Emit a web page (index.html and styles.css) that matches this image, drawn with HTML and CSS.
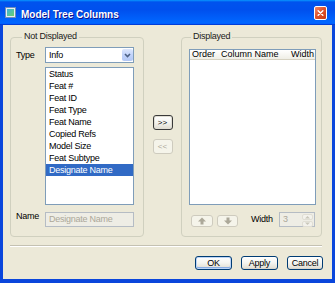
FILE: index.html
```html
<!DOCTYPE html>
<html>
<head>
<meta charset="utf-8">
<link rel="stylesheet" href="styles.css">
</head>
<body>
<div class="window">
  <div class="titlebar">
    <svg class="app-icon" width="11" height="11" viewBox="0 0 11 11">
      <defs>
        <linearGradient id="ig" x1="0" y1="0" x2="1" y2="1">
          <stop offset="0" stop-color="#3BB0E0"/>
          <stop offset="1" stop-color="#6CD36A"/>
        </linearGradient>
      </defs>
      <rect x="0.5" y="0.5" width="10" height="10" fill="#E9EEF4" stroke="#6E8FB8"/>
      <rect x="2" y="2" width="7" height="7" fill="url(#ig)"/>
    </svg>
    <span class="title">Model Tree Columns</span>
    <span class="close">
      <svg width="14" height="14" viewBox="0 0 14 14">
        <path d="M4 4 L10 10 M10 4 L4 10" stroke="#fff" stroke-width="1.8" stroke-linecap="round"/>
      </svg>
    </span>
  </div>
  <div class="frame">
    <div class="main">
      <div class="group group-left">
        <span class="legend legend-left">Not Displayed</span>
        <div class="left-grid">
          <span class="label">Type</span>
          <div class="combo">
            <span class="combo-text">Info</span>
            <span class="combo-btn">
              <svg width="11" height="12" viewBox="0 0 11 12">
                <path d="M3 5 L5.5 7.5 L8 5" fill="none" stroke="#4D6185" stroke-width="1.6"/>
              </svg>
            </span>
          </div>
          <div class="list">
            <div class="item">Status</div>
            <div class="item">Feat #</div>
            <div class="item">Feat ID</div>
            <div class="item">Feat Type</div>
            <div class="item">Feat Name</div>
            <div class="item">Copied Refs</div>
            <div class="item">Model Size</div>
            <div class="item">Feat Subtype</div>
            <div class="item selected">Designate Name</div>
          </div>
          <span class="label">Name</span>
          <div class="field disabled">Designate Name</div>
        </div>
      </div>
      <div class="mid">
        <button class="btn move focused">&gt;&gt;</button>
        <button class="btn move disabled">&lt;&lt;</button>
      </div>
      <div class="group group-right">
        <span class="legend legend-right">Displayed</span>
        <div class="table">
          <div class="thead">
            <span class="th">Order</span>
            <span class="th">Column Name</span>
            <span class="th">Width</span>
          </div>
        </div>
        <div class="right-bottom">
          <button class="btn arrow disabled">
            <svg width="10" height="8" viewBox="0 0 10 8"><path d="M5 0.5 L9 4.5 L6.5 4.5 L6.5 7.5 L3.5 7.5 L3.5 4.5 L1 4.5 Z" fill="#ACA899"/></svg>
          </button>
          <button class="btn arrow disabled">
            <svg width="10" height="8" viewBox="0 0 10 8"><path d="M5 7.5 L9 3.5 L6.5 3.5 L6.5 0.5 L3.5 0.5 L3.5 3.5 L1 3.5 Z" fill="#ACA899"/></svg>
          </button>
          <span class="label width-label">Width</span>
          <div class="spinner disabled">
            <span class="spin-val">3</span>
            <span class="spin-btns">
              <span class="spin-btn"><svg width="7" height="4" viewBox="0 0 7 4"><path d="M1 3.5 L3.5 1 L6 3.5 Z" fill="#C9C7BA"/></svg></span>
              <span class="spin-btn"><svg width="7" height="4" viewBox="0 0 7 4"><path d="M1 0.5 L3.5 3 L6 0.5 Z" fill="#C9C7BA"/></svg></span>
            </span>
          </div>
        </div>
      </div>
    </div>
    <div class="separator"></div>
    <div class="actions">
      <button class="btn action default">OK</button>
      <button class="btn action">Apply</button>
      <button class="btn action narrow">Cancel</button>
    </div>
  </div>
</div>
</body>
</html>
```
FILE: styles.css
```css
html, body {
  margin: 0;
  padding: 0;
  background: #ECE9D8;
}

body {
  font-family: "Liberation Sans", Arial, sans-serif;
  font-size: 9px;
  letter-spacing: -0.25px;
  color: #000;
}

.window {
  width: 335px;
  height: 283px;
  display: flex;
  flex-direction: column;
  overflow: hidden;
}

.titlebar {
  height: 25px;
  flex: none;
  display: flex;
  align-items: center;
  gap: 5px;
  padding: 0 8px 0 5px;
  background: linear-gradient(to bottom, #0997FF 0%, #0053EE 8%, #0050EE 40%, #0066FF 88%, #0066FF 93%, #005BFF 95%, #003DD7 96%, #003DD7 100%);
}

.app-icon {
  flex: none;
  display: block;
}

.title {
  flex: 1;
  color: #fff;
  font-weight: bold;
  font-size: 10px;
  letter-spacing: 0;
  padding-top: 3px;
  text-shadow: 1px 1px 0 #0F1089;
}

.close {
  width: 13px;
  height: 14px;
  border: 1px solid #fff;
  border-radius: 2px;
  box-sizing: border-box;
  background: linear-gradient(135deg, #F08A6A 0%, #E0542E 45%, #C83A14 100%);
  display: flex;
  align-items: center;
  justify-content: center;
  margin-top: 1px;
}

.close svg {
  display: block;
  width: 11px;
  height: 12px;
}

.frame {
  flex: 1;
  display: flex;
  flex-direction: column;
  border-style: solid;
  border-color: #0A46DC;
  border-width: 0 3px 4px 3px;
  background: #ECE9D8;
  padding: 12px 10px 0 7px;
}

.main {
  display: grid;
  grid-template-columns: 134px 37px 141px;
  height: 200px;
}

.group {
  position: relative;
  border: 1px solid #D0D0BF;
  border-radius: 4px;
}

.legend {
  position: absolute;
  top: -7px;
  padding: 0 2px;
  line-height: 11px;
  background: #ECE9D8;
  color: #1A1A1A;
}

.legend-left { left: 11px; }
.legend-right { left: 9px; }

.left-grid {
  display: grid;
  grid-template-columns: 29px 89px;
  grid-template-rows: 16px 138px 15px;
  row-gap: 4px;
  padding: 9px 0 0 5px;
}

.left-grid .field {
  margin-top: 3px;
}

.label {
  align-self: center;
  line-height: 11px;
}

.left-grid .list {
  grid-column: 2;
}

.combo {
  box-sizing: border-box;
  height: 16px;
  border: 1px solid #7F9DB9;
  background: #fff;
  display: flex;
  align-items: center;
  padding: 1px 0 1px 3px;
}

.combo-text {
  flex: 1;
  line-height: 11px;
}

.combo-btn {
  width: 11px;
  height: 12px;
  border-radius: 2px;
  background: linear-gradient(to bottom, #DCE6FC 0%, #C1D3FB 50%, #B2C7F5 100%);
}

.combo-btn svg {
  display: block;
}

.list {
  box-sizing: border-box;
  border: 1px solid #7F9DB9;
  background: #fff;
  overflow: hidden;
}

.item {
  line-height: 12px;
  height: 12px;
  padding-left: 3px;
  white-space: nowrap;
}

.item.selected {
  background: #316AC5;
  color: #fff;
}

.field {
  box-sizing: border-box;
  height: 15px;
  border: 1px solid #B5BCC4;
  background: #EEEDE5;
  padding-left: 3px;
  line-height: 13px;
  white-space: nowrap;
  overflow: hidden;
}

.disabled {
  color: #ACA899;
}

.mid {
  display: flex;
  flex-direction: column;
  align-items: center;
  padding-top: 78px;
  gap: 9px;
}

.btn {
  font-family: inherit;
  font-size: 9px;
  letter-spacing: -0.25px;
  color: #000;
  box-sizing: border-box;
  border: 1px solid #003C74;
  border-radius: 3px;
  background: linear-gradient(to bottom, #FFFFFF 0%, #F4F4F0 50%, #E3E0D6 90%, #D6D0C5 100%);
  padding: 0;
  margin: 0;
  line-height: 12px;
}

.btn.disabled {
  border-color: #CECBBE;
  background: #F5F4EA;
  color: #ACA899;
}

.move {
  width: 20px;
  height: 15px;
  font-size: 8px;
  letter-spacing: 0;
}

.move.focused {
  border-color: #3A3A3A;
  box-shadow: inset 0 0 0 1px #E0DED4;
}

.group-right {
  display: flex;
  flex-direction: column;
  padding: 11px 5px 9px 7px;
}

.table {
  box-sizing: border-box;
  height: 156px;
  border: 1px solid #7F9DB9;
  background: #fff;
  overflow: hidden;
}

.thead {
  display: grid;
  grid-template-columns: 29px 70px 1fr;
  height: 9px;
  background: linear-gradient(to bottom, #FFFFFF, #EFEEE6);
  border-bottom: 1px solid #D6D2C2;
  white-space: nowrap;
  overflow: hidden;
  letter-spacing: 0;
}

.th {
  padding-left: 2px;
  line-height: 9px;
  overflow: hidden;
}

.right-bottom {
  display: flex;
  align-items: center;
  margin-top: 7px;
  height: 15px;
  padding-left: 2px;
}

.arrow {
  width: 22px;
  height: 12px;
  display: flex;
  align-items: center;
  justify-content: center;
  margin-top: 2px;
}

.arrow + .arrow {
  margin-left: 4px;
  width: 21px;
}

.arrow svg {
  display: block;
}

.width-label {
  margin-left: 13px;
  color: #000;
}

.spinner {
  box-sizing: border-box;
  margin-left: auto;
  margin-right: 1px;
  width: 36px;
  height: 15px;
  border: 1px solid #B5BCC4;
  background: #EEEDE5;
  display: flex;
}

.spin-val {
  flex: 1;
  padding-left: 3px;
  line-height: 13px;
}

.spin-btns {
  width: 11px;
  display: flex;
  flex-direction: column;
  gap: 1px;
  padding: 1px;
}

.spin-btn {
  flex: 1;
  border-radius: 2px;
  background: #F3F2EC;
  border: 1px solid #E0DED4;
  display: flex;
  align-items: center;
  justify-content: center;
}

.spin-btn svg {
  display: block;
}

.separator {
  margin-top: 8px;
  height: 1px;
  border-top: 1px solid #C4C1B2;
  background: #FFFFFF;
}

.actions {
  display: flex;
  justify-content: flex-end;
  gap: 9px;
  margin-top: 9px;
  margin-right: -1px;
}

.action {
  width: 37px;
  height: 14px;
}

.action.narrow {
  width: 36px;
}

.action.default {
  box-shadow: inset 0 0 0 1px #BCD4F6, inset 0 -1px 0 1px #89ADE4;
}
```
